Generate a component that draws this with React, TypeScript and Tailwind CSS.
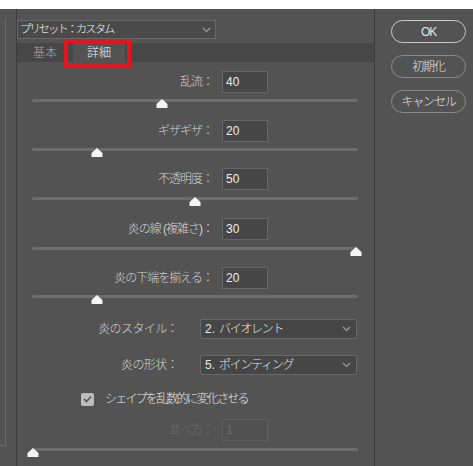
import React from "react"

type SliderRow = { label: string; value: number; pos: number; rowMt: string; sliderMt: string }

// pos is the thumb position along the track, 0..1
const sliderRows: SliderRow[] = [
  { label: "乱流：", value: 40, pos: 0.4, rowMt: "mt-[9px]", sliderMt: "mt-[6px]" },
  { label: "ギザギザ：", value: 20, pos: 0.2, rowMt: "mt-[13px]", sliderMt: "mt-[6px]" },
  { label: "不透明度：", value: 50, pos: 0.5, rowMt: "mt-[12px]", sliderMt: "mt-[7px]" },
  { label: "炎の線 (複雑さ)：", value: 30, pos: 0.993, rowMt: "mt-[13px]", sliderMt: "mt-[7px]" },
  { label: "炎の下端を揃える：", value: 20, pos: 0.2, rowMt: "mt-[12px]", sliderMt: "mt-[6px]" },
]

function Chevron() {
  return (
    <svg width="9" height="6" viewBox="0 0 9 6" className="shrink-0">
      <path d="M1 1 L4.5 4.5 L8 1" fill="none" stroke="#a0a0a0" strokeWidth="1.1" />
    </svg>
  )
}

function Slider({ pos }: { pos: number }) {
  return (
    <div className="relative ml-[15px] h-[8px] w-[326px]">
      <div className="mt-[4px] h-[3px] rounded-full bg-[#6c6c6c]" />
      {/* thumb: little white "house" shape pointing up */}
      <svg
        width="12"
        height="9"
        viewBox="0 0 12 9"
        className="absolute top-0 -translate-x-1/2"
        style={{ left: `${pos * 100}%` }}
      >
        <polygon points="6,0 11.5,5 11.5,9 0.5,9 0.5,5" fill="#f4f4f4" />
      </svg>
    </div>
  )
}

function NumberRow({ label, value, mt, disabled }: { label: string; value: number; mt: string; disabled?: boolean }) {
  return (
    <div className={`${mt} flex h-[22px] items-center`}>
      <div className={`w-[196px] text-right text-[12px] tracking-[-1px] ${disabled ? "text-[#6e6e6e]" : "text-[#d2d2d2]"}`}>
        {label}
      </div>
      <div
        className={`ml-[9px] flex h-[22px] w-[46px] items-center border px-[3px] text-[12px] font-normal ${
          disabled ? "border-[#5f5f5f] bg-[#515151] text-[#6c6c6c]" : "border-[#666] bg-[#464646] text-[#ececec]"
        }`}
      >
        {value}
      </div>
    </div>
  )
}

function SelectRow({ label, num, value, mt }: { label: string; num: string; value: string; mt: string }) {
  return (
    <div className={`${mt} flex h-[20px] items-center`}>
      <div className="w-[161px] text-right text-[12px] tracking-[-0.6px] text-[#d2d2d2]">{label}</div>
      <div className="ml-[22px] flex h-[20px] w-[157px] items-center justify-between rounded-[2px] border border-[#686868] bg-[#464646] pl-[4px] pr-[5px] text-[12px] text-[#e6e6e6]">
        <span>
          {num}
          <span className="ml-[4px] tracking-[-1.3px]">{value}</span>
        </span>
        <Chevron />
      </div>
    </div>
  )
}

function RoundButton({ label, strong, mt }: { label: string; strong?: boolean; mt?: string }) {
  return (
    <div
      className={`${mt ?? ""} flex h-[23px] w-[75px] items-center justify-center rounded-full border-[1.5px] text-[12px] tracking-[-1.2px] text-[#e4e4e4] ${
        strong ? "border-[#c9c9c9]" : "border-[#8a8a8a]"
      }`}
    >
      {label}
    </div>
  )
}

export default function App() {
  return (
    <div className="flex h-[466px] w-[473px] flex-col bg-white font-light font-['Liberation_Sans','Noto_Sans_CJK_JP',sans-serif]">
      <div className="h-[9px] bg-white" />
      <div className="flex flex-1 bg-[#535353]">
        {/* Left edge: neighbouring panel */}
        <div className="w-[17px] border-r border-[#3c3c3c] pt-[9px]">
          <div className="h-[428px] w-[6px] border-r border-b border-[#6a6a6a]" />
        </div>

        {/* Main settings panel */}
        <div className="w-[358px] border-r border-[#3c3c3c]">
          <div className="mt-[11px] flex h-[19px] w-[199px] items-center justify-between border border-[#696969] bg-[#4a4a4a] pl-[2px] pr-[4px] text-[11.5px] tracking-[-2.2px] text-[#ececec]">
            <span>プリセット：カスタム</span>
            <Chevron />
          </div>

          {/* Tabs */}
          <div className="mt-[4px] flex h-[19px] bg-[#474747] text-[12px]">
            <div className="flex w-[56px] items-center justify-center text-[#a8a8a8]">基本</div>
            <div className="relative flex w-[52px] items-center justify-center bg-[#535353] text-[#f0f0f0]">
              詳細
              <div className="absolute -top-[4px] -left-[9px] h-[29px] w-[67px] border-4 border-[#e3161d]" />
            </div>
          </div>

          {sliderRows.map((row) => (
            <div key={row.label}>
              <NumberRow label={row.label} value={row.value} mt={row.rowMt} />
              <div className={row.sliderMt}>
                <Slider pos={row.pos} />
              </div>
            </div>
          ))}

          <SelectRow label="炎のスタイル：" num="2." value="バイオレント" mt="mt-[16px]" />
          <SelectRow label="炎の形状：" num="5." value="ポインティング" mt="mt-[16px]" />

          <div className="mt-[17px] flex h-[14px] items-center">
            <div className="ml-[64px] flex h-[13px] w-[13px] items-center justify-center rounded-[2px] bg-[#bdbdbd]">
              <svg width="9" height="8" viewBox="0 0 9 8">
                <path d="M1 4 L3.5 6.5 L8 1.5" fill="none" stroke="#555" strokeWidth="1.6" />
              </svg>
            </div>
            <span className="ml-[11px] text-[12px] tracking-[-1.8px] text-[#e4e4e4]">シェイプを乱数的に変化させる</span>
          </div>

          <NumberRow label="並べ方：" value={1} mt="mt-[13px]" disabled />
          <div className="mt-[7px]">
            <Slider pos={0.004} />
          </div>
        </div>

        {/* Dialog buttons */}
        <div className="flex-1 pt-[11px] pl-[16px]">
          <RoundButton label="OK" strong />
          <RoundButton label="初期化" mt="mt-[12px]" />
          <RoundButton label="キャンセル" mt="mt-[12px]" />
        </div>
      </div>
    </div>
  )
}
